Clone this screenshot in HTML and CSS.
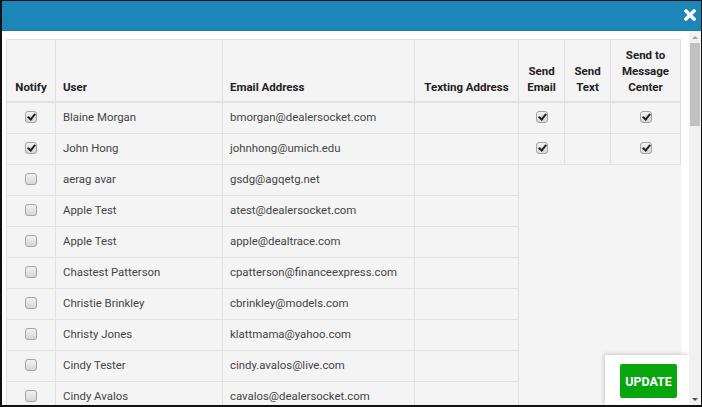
FILE: index.html
```html
<!DOCTYPE html>
<html lang="en">
<head>
  <meta charset="UTF-8">
  <title>Notify Users</title>
  <link rel="stylesheet" href="styles.css">
</head>
<body>
  <div class="modal">
    <header class="modal-header">
      <button class="close" type="button" aria-label="Close">
        <svg width="12" height="12" viewBox="0 0 12 12"><path d="M2 2 L10 10 M10 2 L2 10" stroke="#fff" stroke-width="3.4" stroke-linecap="square"/></svg>
      </button>
    </header>

    <div class="modal-body">
      <div class="content">
        <table class="users">
          <colgroup>
            <col class="c-notify">
            <col class="c-user">
            <col class="c-email">
            <col class="c-text">
            <col class="c-small">
            <col class="c-small">
            <col class="c-center">
          </colgroup>
          <thead>
            <tr>
              <th class="center">Notify</th>
              <th>User</th>
              <th>Email Address</th>
              <th class="center">Texting Address</th>
              <th class="center">Send<br>Email</th>
              <th class="center">Send<br>Text</th>
              <th class="center">Send to<br>Message<br>Center</th>
            </tr>
          </thead>
          <tbody>
            <tr>
              <td class="center"><span class="chk checked"></span></td>
              <td>Blaine Morgan</td>
              <td>bmorgan@dealersocket.com</td>
              <td></td>
              <td class="center"><span class="chk checked"></span></td>
              <td></td>
              <td class="center"><span class="chk checked"></span></td>
            </tr>
            <tr>
              <td class="center"><span class="chk checked"></span></td>
              <td>John Hong</td>
              <td>johnhong@umich.edu</td>
              <td></td>
              <td class="center"><span class="chk checked"></span></td>
              <td></td>
              <td class="center"><span class="chk checked"></span></td>
            </tr>
            <tr>
              <td class="center"><span class="chk"></span></td>
              <td>aerag avar</td>
              <td>gsdg@agqetg.net</td>
              <td></td>
            </tr>
            <tr>
              <td class="center"><span class="chk"></span></td>
              <td>Apple Test</td>
              <td>atest@dealersocket.com</td>
              <td></td>
            </tr>
            <tr>
              <td class="center"><span class="chk"></span></td>
              <td>Apple Test</td>
              <td>apple@dealtrace.com</td>
              <td></td>
            </tr>
            <tr>
              <td class="center"><span class="chk"></span></td>
              <td>Chastest Patterson</td>
              <td>cpatterson@financeexpress.com</td>
              <td></td>
            </tr>
            <tr>
              <td class="center"><span class="chk"></span></td>
              <td>Christie Brinkley</td>
              <td>cbrinkley@models.com</td>
              <td></td>
            </tr>
            <tr>
              <td class="center"><span class="chk"></span></td>
              <td>Christy Jones</td>
              <td>klattmama@yahoo.com</td>
              <td></td>
            </tr>
            <tr>
              <td class="center"><span class="chk"></span></td>
              <td>Cindy Tester</td>
              <td>cindy.avalos@live.com</td>
              <td></td>
            </tr>
            <tr>
              <td class="center"><span class="chk"></span></td>
              <td>Cindy Avalos</td>
              <td>cavalos@dealersocket.com</td>
              <td></td>
            </tr>
          </tbody>
        </table>

        <div class="footer">
          <button class="update" type="button">UPDATE</button>
        </div>
      </div>

      <div class="scrollbar">
        <span class="arrow up"></span>
        <div class="track"><div class="thumb"></div></div>
        <span class="arrow down"></span>
      </div>
    </div>
  </div>
</body>
</html>
```

FILE: styles.css
```css
* {
  box-sizing: border-box;
}

body {
  margin: 0;
  font-family: Roboto, Arial, sans-serif;
  font-size: 12px;
  color: #444;
  background-color: #fff;
}

.modal {
  width: 702px;
  height: 407px;
  border: 1px solid #111;
  border-left-width: 2px;
  border-bottom-width: 2px;
  display: flex;
  flex-direction: column;
  overflow: hidden;
}

.modal-header {
  height: 30px;
  flex-shrink: 0;
  background-color: #1d86b8;
  border-bottom: 1px solid #1a7aa8;
  display: flex;
  justify-content: flex-end;
  align-items: flex-start;
}

.close {
  background: none;
  border: none;
  padding: 0;
  margin: 8px 5px 0 0;
  width: 12px;
  height: 12px;
  cursor: pointer;
}

.close svg {
  display: block;
}

.modal-body {
  flex: 1;
  display: flex;
  min-height: 0;
}

.content {
  flex: 1;
  position: relative;
  padding: 8px 8px 0 4px;
  overflow: hidden;
}

/* table */

.users {
  width: 674px;
  table-layout: fixed;
  border-collapse: collapse;
  background-color: #f4f4f4;
}

.c-notify { width: 49px; }
.c-user { width: 167px; }
.c-email { width: 192px; }
.c-text { width: 104px; }
.c-small { width: 46px; }
.c-center { width: 70px; }

.users th,
.users td {
  border: 1px solid #e1e1e1;
  text-align: left;
  white-space: nowrap;
}

.users th {
  padding: 7px 7px 6px;
  vertical-align: bottom;
  font-weight: bold;
  font-size: 11.5px;
  color: #222;
  line-height: 16px;
  border-bottom-width: 2px;
}

.users td {
  height: 31px;
  padding: 0 7px;
  vertical-align: middle;
  line-height: 17px;
  font-size: 11.4px;
}

.users .center {
  text-align: center;
}

.chk {
  display: inline-block;
  width: 12px;
  height: 12px;
  vertical-align: middle;
  border: 1px solid #a4a4a4;
  border-radius: 3px;
  background: linear-gradient(#f2f2f2, #d6d6d6);
  position: relative;
  top: -1px;
}

.chk.checked::after {
  content: "";
  position: absolute;
  left: 3px;
  top: 0px;
  width: 3px;
  height: 6px;
  border: solid #222;
  border-width: 0 2px 2px 0;
  transform: rotate(40deg);
}

/* update panel */

.footer {
  position: absolute;
  right: 0;
  bottom: 0;
  width: 84px;
  height: 50px;
  background-color: #fff;
  box-shadow: -1px -1px 4px rgba(0, 0, 0, 0.18);
  padding: 9px 0 0 15px;
}

.update {
  width: 57px;
  height: 34px;
  padding: 0;
  border: none;
  border-radius: 2px;
  background-color: #07a60f;
  color: #fff;
  font-family: Roboto, Arial, sans-serif;
  font-weight: bold;
  font-size: 12.5px;
  letter-spacing: 0;
  cursor: pointer;
}

/* fake scrollbar */

.scrollbar {
  width: 12px;
  background-color: #f1f1f1;
  display: flex;
  flex-direction: column;
  flex-shrink: 0;
}

.arrow {
  height: 12px;
  display: flex;
  justify-content: center;
  align-items: center;
}

.arrow::before {
  content: "";
  border-left: 3px solid transparent;
  border-right: 3px solid transparent;
}

.arrow.up::before {
  border-bottom: 3px solid #a3a3a3;
}

.arrow.down::before {
  border-top: 3px solid #505050;
}

.track {
  flex: 1;
  padding: 0 1px;
}

.thumb {
  height: 83px;
  background-color: #c1c1c1;
}
```
